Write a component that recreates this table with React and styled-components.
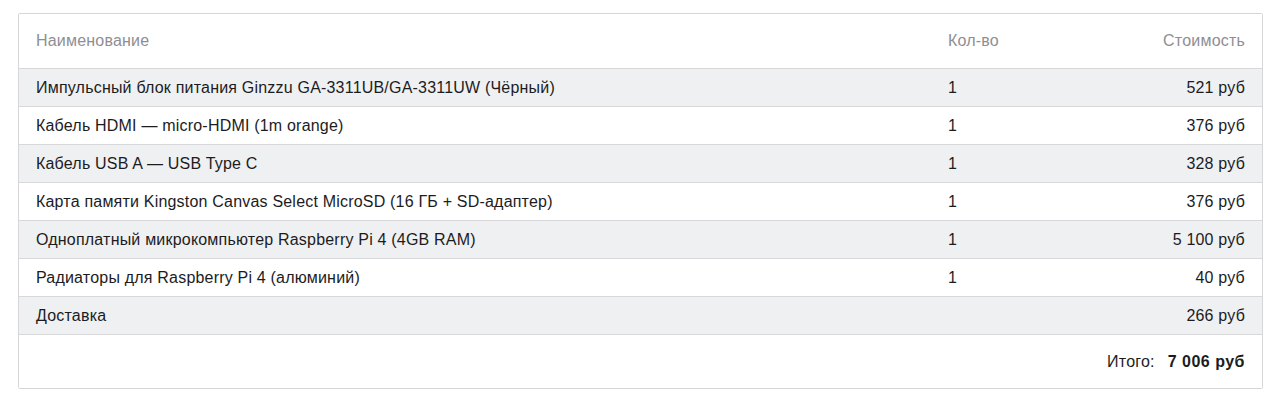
import React from "react";
import styled, { createGlobalStyle } from "styled-components";

const Global = createGlobalStyle`
  html, body { margin: 0; padding: 0; background: #fff; }
  body { font-family: "Liberation Sans", Arial, sans-serif; color: #1c1c1e; }
`;

const Page = styled.div`
  padding: 13px 17px 0 18px;
`;

const Card = styled.div`
  border: 1px solid #d6d6d8;
  border-radius: 2px;
  background: #fff;
`;

const Row = styled.div`
  display: grid;
  grid-template-columns: 912px 1fr 1fr;
  align-items: center;
  height: ${(p) => p.$h || 38}px;
  box-sizing: border-box;
  padding: 0 17px;
  font-size: 16px;
  letter-spacing: 0.2px;
  background: ${(p) => (p.$striped ? "#eff0f2" : "#fff")};
  border-top: ${(p) => (p.$first ? "none" : "1px solid #d8d8da")};
  color: ${(p) => (p.$head ? "#8e8e93" : "#1c1c1e")};
`;

const Cell = styled.div`
  text-align: ${(p) => (p.$right ? "right" : "left")};
  white-space: nowrap;
`;

const Total = styled.div`
  grid-column: 1 / -1;
  text-align: right;
`;

const Bold = styled.b`
  font-weight: 700;
  letter-spacing: 0.5px;
  margin-left: 13px;
`;

const items = [
  ["Импульсный блок питания Ginzzu GA-3311UB/GA-3311UW (Чёрный)", "1", "521 руб"],
  ["Кабель HDMI — micro-HDMI (1m orange)", "1", "376 руб"],
  ["Кабель USB A — USB Type C", "1", "328 руб"],
  ["Карта памяти Kingston Canvas Select MicroSD (16 ГБ + SD-адаптер)", "1", "376 руб"],
  ["Одноплатный микрокомпьютер Raspberry Pi 4 (4GB RAM)", "1", "5 100 руб"],
  ["Радиаторы для Raspberry Pi 4 (алюминий)", "1", "40 руб"],
  ["Доставка", "", "266 руб"],
];

export default function App() {
  return (
    <Page>
      <Global />
      <Card>
        <Row $head $first $h={54}>
          <Cell>Наименование</Cell>
          <Cell>Кол-во</Cell>
          <Cell $right>Стоимость</Cell>
        </Row>
        {items.map((it, i) => (
          <Row key={i} $striped={i % 2 === 0}>
            <Cell>{it[0]}</Cell>
            <Cell>{it[1]}</Cell>
            <Cell $right>{it[2]}</Cell>
          </Row>
        ))}
        <Row $h={54}>
          <Total>
            Итого:<Bold>7 006 руб</Bold>
          </Total>
        </Row>
      </Card>
    </Page>
  );
}
